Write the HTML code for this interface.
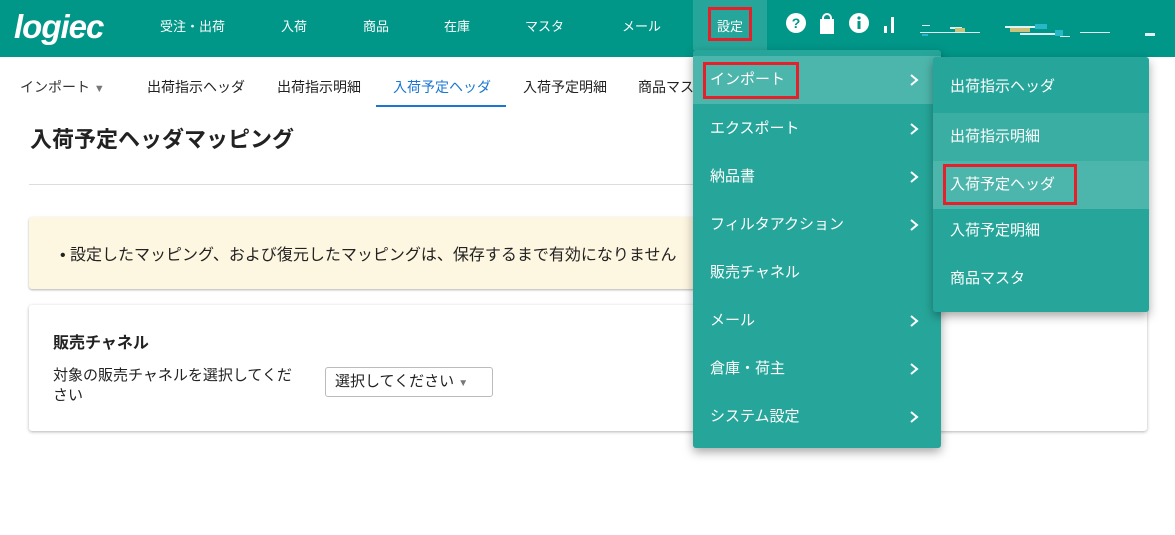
<!DOCTYPE html>
<html><head><meta charset="utf-8"><style>
*{box-sizing:border-box;margin:0;padding:0}
body{width:1175px;height:535px;overflow:hidden;background:#fff;font-family:"Liberation Sans","Noto Sans CJK JP",sans-serif;position:relative;color:#222}
.a{position:absolute}
.hdr{left:0;top:0;width:1175px;height:57px;background:#009688}
.nav{color:#fff;font-size:13px;top:16px}
.sub{font-size:14px;top:77px;color:#222}
.menu{background:#26a69a;color:#fff;font-size:15px;border-radius:3px;box-shadow:0 4px 10px rgba(0,0,0,.35)}
.it{position:absolute;left:0;right:0;height:48px;line-height:48px;padding-left:17px}
.hl{background:#4db6ac}
.chev{position:absolute;right:20px;top:17px;width:14px;height:14px}
.red{position:absolute;border:3px solid #e5202a}
</style></head><body>
<div class="a hdr"></div>
<div class="a" style="left:14px;top:8px;color:#fff;font:italic bold 33px 'Liberation Sans',sans-serif;letter-spacing:-1px">logiec</div>
<div class="a nav" style="left:160px">受注・出荷</div>
<div class="a nav" style="left:281px">入荷</div>
<div class="a nav" style="left:363px">商品</div>
<div class="a nav" style="left:444px">在庫</div>
<div class="a nav" style="left:525px">マスタ</div>
<div class="a nav" style="left:622px">メール</div>
<div class="a" style="left:693px;top:0;width:74px;height:50px;background:#26a69a"></div>
<div class="a nav" style="left:717px">設定</div>
<div class="red" style="left:708px;top:7px;width:44px;height:34px"></div>
<svg class="a" style="left:785px;top:12px" width="120" height="24">
<circle cx="11" cy="11" r="10" fill="#fff"/><text x="11" y="16" font-size="14" font-weight="bold" text-anchor="middle" fill="#009688" font-family="Liberation Sans">?</text>
<path d="M35 7h14v15h-14z" fill="#fff"/><path d="M38 8v-2a4 4 0 0 1 8 0v2" stroke="#fff" stroke-width="2" fill="none"/>
<circle cx="74" cy="11" r="10" fill="#fff"/><rect x="72.5" y="9" width="3" height="8" fill="#009688"/><circle cx="74" cy="6" r="1.6" fill="#009688"/>
<rect x="99" y="14" width="3" height="7" fill="#fff"/><rect x="106" y="5" width="3" height="16" fill="#fff"/>
</svg>
<svg class="a" style="left:920px;top:22px" width="245" height="20">
<g fill="#e0f2f1"><rect x="2" y="3" width="8" height="1"/><rect x="0" y="10" width="60" height="1"/><rect x="30" y="5" width="12" height="2"/><rect x="85" y="4" width="30" height="2"/><rect x="100" y="11" width="40" height="2"/><rect x="140" y="14" width="10" height="1"/><rect x="160" y="10" width="30" height="1"/><rect x="225" y="11" width="10" height="3"/></g>
<g fill="#c8c27a"><rect x="35" y="6" width="10" height="4"/><rect x="90" y="6" width="20" height="4"/></g>
<g fill="#29b6c6"><rect x="2" y="12" width="6" height="2"/><rect x="115" y="2" width="12" height="5"/><rect x="135" y="8" width="8" height="6"/></g>
</svg>
<div class="a sub" style="left:20px;color:#333">インポート <span style="color:#777;font-size:11px">▼</span></div>
<div class="a sub" style="left:147px">出荷指示ヘッダ</div>
<div class="a sub" style="left:277px">出荷指示明細</div>
<div class="a sub" style="left:393px;color:#1976d2">入荷予定ヘッダ</div>
<div class="a sub" style="left:523px">入荷予定明細</div>
<div class="a sub" style="left:638px">商品マスタ</div>
<div class="a" style="left:376px;top:105px;width:130px;height:2px;background:#1976d2"></div>
<div class="a" style="left:30px;top:122px;font-size:22px;font-weight:bold;color:#222">入荷予定ヘッダマッピング</div>
<div class="a" style="left:29px;top:184px;width:680px;height:1px;background:#ddd"></div>
<div class="a" style="left:29px;top:217px;width:700px;height:72px;background:#fdf6e0;box-shadow:0 1px 2px rgba(0,0,0,.3);border-radius:3px"></div>
<div class="a" style="left:60px;top:241px;font-size:16px;color:#222">• 設定したマッピング、および復元したマッピングは、保存するまで有効になりません</div>
<div class="a" style="left:29px;top:305px;width:1118px;height:126px;background:#fff;box-shadow:0 1px 3px rgba(0,0,0,.3);border-radius:3px"></div>
<div class="a" style="left:53px;top:329px;font-size:16px;font-weight:bold">販売チャネル</div>
<div class="a" style="left:53px;top:366px;font-size:15px;line-height:20px;width:245px">対象の販売チャネルを選択してください</div>
<div class="a" style="left:325px;top:367px;width:168px;height:30px;border:1px solid #bbb;border-radius:3px;font-size:15px;line-height:28px;padding-left:9px">選択してください <span style="color:#777;font-size:10px">▼</span></div>
<div class="a menu" style="left:693px;top:50px;width:248px;height:398px">
<div class="it hl" style="top:6px">インポート<svg class="chev"><path d="M4 2l6 5-6 5" stroke="#fff" stroke-width="2" fill="none"/></svg></div>
<div class="it" style="top:55px">エクスポート<svg class="chev"><path d="M4 2l6 5-6 5" stroke="#fff" stroke-width="2" fill="none"/></svg></div>
<div class="it" style="top:103px">納品書<svg class="chev"><path d="M4 2l6 5-6 5" stroke="#fff" stroke-width="2" fill="none"/></svg></div>
<div class="it" style="top:151px">フィルタアクション<svg class="chev"><path d="M4 2l6 5-6 5" stroke="#fff" stroke-width="2" fill="none"/></svg></div>
<div class="it" style="top:199px">販売チャネル</div>
<div class="it" style="top:247px">メール<svg class="chev"><path d="M4 2l6 5-6 5" stroke="#fff" stroke-width="2" fill="none"/></svg></div>
<div class="it" style="top:295px">倉庫・荷主<svg class="chev"><path d="M4 2l6 5-6 5" stroke="#fff" stroke-width="2" fill="none"/></svg></div>
<div class="it" style="top:343px">システム設定<svg class="chev"><path d="M4 2l6 5-6 5" stroke="#fff" stroke-width="2" fill="none"/></svg></div>
</div>
<div class="red" style="left:703px;top:62px;width:96px;height:37px"></div>
<div class="a menu" style="left:933px;top:57px;width:216px;height:255px">
<div class="it" style="top:6px">出荷指示ヘッダ</div>
<div class="it hl" style="top:56px;background:#3aaea3">出荷指示明細</div>
<div class="it hl" style="top:104px">入荷予定ヘッダ</div>
<div class="it" style="top:150px">入荷予定明細</div>
<div class="it" style="top:198px">商品マスタ</div>
</div>
<div class="red" style="left:943px;top:164px;width:134px;height:41px"></div>
</body></html>
